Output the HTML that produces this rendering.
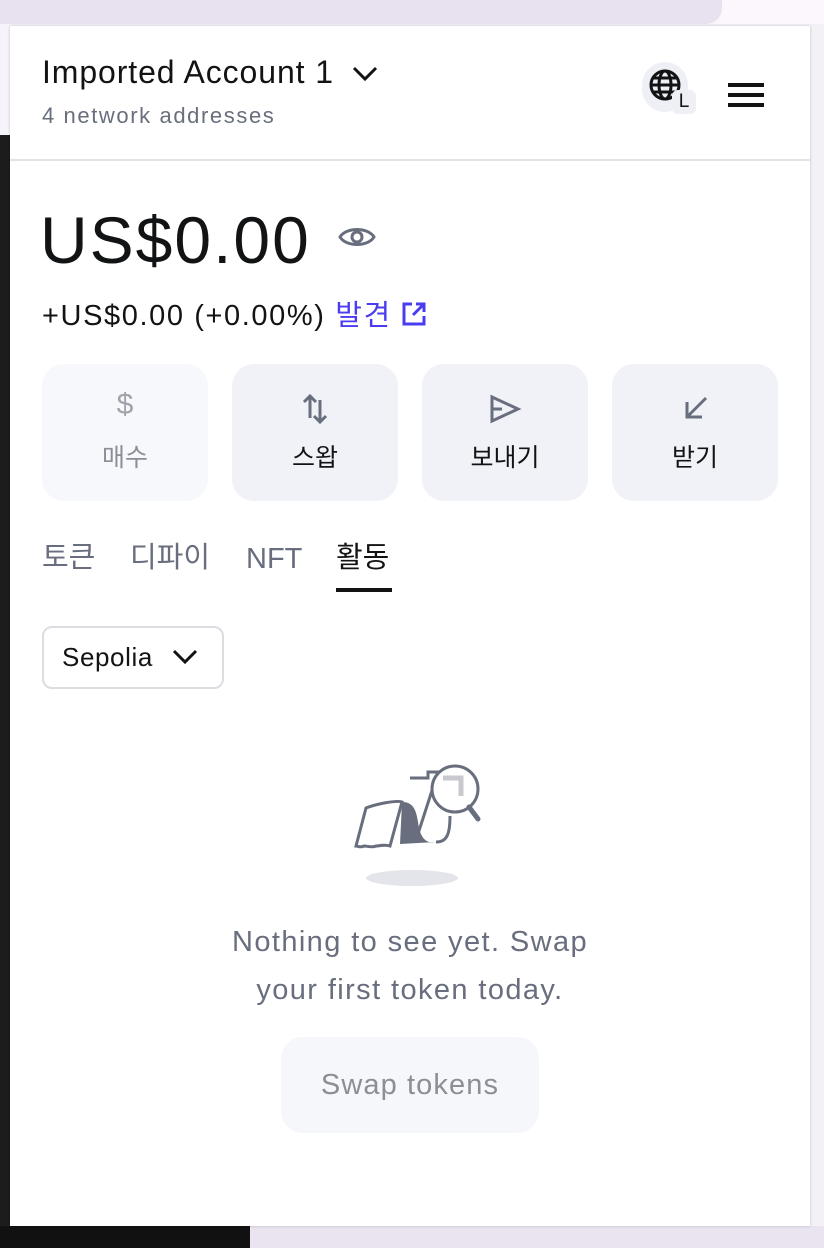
<!DOCTYPE html>
<html><head><meta charset="utf-8"><style>
*{box-sizing:border-box;margin:0;padding:0}
body{width:824px;height:1248px;position:relative;overflow:hidden;background:#f7f3fa;font-family:"Liberation Sans","Noto Sans CJK KR",sans-serif;}
.top{position:absolute;left:0;top:0;width:824px;height:24px;background:#fbf7fd}
.url{position:absolute;left:0;top:0;width:722px;height:24px;background:#e8e1ef;border-radius:0 0 16px 0}
.leftdark{position:absolute;left:0;top:135px;width:10px;height:1113px;background:#1c1c1c}
.bottom{position:absolute;left:0;top:1226px;width:824px;height:22px;background:#eae3f0}
.bottom .d{position:absolute;left:0;top:0;width:250px;height:22px;background:#111}
.right{position:absolute;left:810px;top:24px;width:14px;height:1224px;background:#f3f0f6}
.pop{position:absolute;left:10px;top:26px;width:800px;height:1200px;background:#fff;box-shadow:0 0 3px rgba(0,0,0,.2)}
.hdr{height:135px;border-bottom:2px solid #e2e3e8;position:relative}
.acct{position:absolute;left:32px;top:28px;font-size:32px;color:#121314;letter-spacing:.9px}
.sub{position:absolute;left:32px;top:77px;font-size:22px;color:#686e7d;letter-spacing:1.6px}
.bal{position:absolute;left:30px;top:176px;font-size:66px;color:#121314;letter-spacing:2px}
.chg{position:absolute;left:32px;top:266px;font-size:29px;color:#121314;letter-spacing:1.6px}
.disc{color:#4a3cf0}
.btn{position:absolute;top:338px;width:166px;height:137px;border-radius:22px;background:#f1f2f7;text-align:center}
.btn .l{position:absolute;left:0;right:0;top:74px;font-size:25px;color:#121314}
.tabs{position:absolute;top:512px;font-size:29px;color:#686e7d;line-height:40px}
.sel{position:absolute;left:32px;top:600px;width:182px;height:63px;border:2px solid #dcdde2;border-radius:10px;font-size:26px;color:#121314;padding:14px 0 0 18px;letter-spacing:.6px}
.empty{position:absolute;left:0;width:800px;text-align:center;font-size:29px;color:#686e7d;line-height:48px;top:892px;letter-spacing:1.4px}
.sw{position:absolute;left:271px;top:1011px;width:258px;height:96px;border-radius:22px;background:#f6f7fb;color:#8b8e96;font-size:29px;text-align:center;line-height:96px;letter-spacing:1.1px}
</style></head><body>
<div class="top"><div class="url"></div></div>
<div class="leftdark"></div><div class="right"></div>
<div class="bottom"><div class="d"></div></div>
<div class="pop">
 <div class="hdr">
  <div class="acct">Imported Account 1 <svg width="30" height="20" viewBox="0 0 28 20" style="margin-left:6px"><path d="M3 5l11 11 11-11" fill="none" stroke="#121314" stroke-width="3"/></svg></div>
  <div class="sub">4 network addresses</div>
  <div style="position:absolute;left:632px;top:36px;width:46px;height:50px;border-radius:23px;background:#eef0f5"></div>
  <svg style="position:absolute;left:638px;top:42px" width="34" height="34" viewBox="0 0 34 34"><g fill="none" stroke="#121314" stroke-width="3"><circle cx="17" cy="17" r="14"/><ellipse cx="17" cy="17" rx="6" ry="14"/><path d="M3 17h28M5 10h24M5 24h24"/></g></svg>
  <div style="position:absolute;left:662px;top:64px;width:24px;height:24px;border-radius:6px;background:#eef0f5;font-size:19px;text-align:center;line-height:24px;color:#121314">L</div>
  <div style="position:absolute;left:718px;top:57px;width:36px;height:4px;background:#121314;box-shadow:0 10px 0 #121314,0 20px 0 #121314"></div>
 </div>
 <div class="bal">US$0.00</div>
 <svg style="position:absolute;left:328px;top:198px" width="38" height="26" viewBox="0 0 38 26"><path d="M2 13C8 3 30 3 36 13C30 23 8 23 2 13Z" fill="none" stroke="#686e7d" stroke-width="3"/><circle cx="19" cy="13" r="5" fill="none" stroke="#686e7d" stroke-width="3"/></svg>
 <div class="chg">+US$0.00 (+0.00%) <span class="disc">발견</span> <svg width="26" height="26" viewBox="0 0 26 26" style="vertical-align:-2px"><path d="M11 3H3v20h20v-8M15 3h8v8M23 3L12 14" fill="none" stroke="#4a3cf0" stroke-width="3"/></svg></div>
 <div class="btn" style="left:32px;background:#f7f8fb"><div style="position:absolute;left:0;right:0;top:24px;font-size:30px;color:#a0a3ab">$</div><div class="l" style="color:#8b8e96">매수</div></div>
 <div class="btn" style="left:222px"><svg style="position:absolute;left:68px;top:28px" width="30" height="34" viewBox="0 0 30 34"><path d="M10 26V4M4 10l6-6 6 6M20 8v22M14 24l6 6 6-6" fill="none" stroke="#686e7d" stroke-width="3"/></svg><div class="l">스왑</div></div>
 <div class="btn" style="left:412px"><svg style="position:absolute;left:66px;top:30px" width="34" height="30" viewBox="0 0 34 30"><path d="M4 3L30 15 4 27V3Z M4 15h10" fill="none" stroke="#686e7d" stroke-width="3"/></svg><div class="l">보내기</div></div>
 <div class="btn" style="left:602px"><svg style="position:absolute;left:70px;top:30px" width="28" height="28" viewBox="0 0 28 28"><path d="M24 4L5 23M5 8v15h15" fill="none" stroke="#686e7d" stroke-width="3"/></svg><div class="l">받기</div></div>
 <div class="tabs" style="left:32px">토큰</div>
 <div class="tabs" style="left:120px">디파이</div>
 <div class="tabs" style="left:236px;top:513px;font-size:29px">NFT</div>
 <div class="tabs" style="left:326px;color:#121314">활동</div>
 <div style="position:absolute;left:326px;top:562px;width:56px;height:4px;background:#121314"></div>
 <div class="sel">Sepolia <svg width="28" height="20" viewBox="0 0 28 20" style="margin-left:10px"><path d="M3 5l11 11 11-11" fill="none" stroke="#121314" stroke-width="3"/></svg></div>
 <svg style="position:absolute;left:330px;top:714px" width="160" height="150" viewBox="0 0 160 150">
  <ellipse cx="72" cy="138" rx="46" ry="8" fill="#e4e5ea"/>
  <path d="M70 38h18v-6h10L76 100" fill="none" stroke="#686e7d" stroke-width="3"/>
  <path d="M26 68c10-4 30-8 36-6l-12 44c-6-2-10 0-14 0-4 2-8 0-12 0-4 2-6 0-8 0z" fill="#fff" stroke="#686e7d" stroke-width="3"/>
  <path d="M62 62c10 0 14 6 16 20 2 16 8 22 18 20l-36 2z" fill="#686e7d"/>
  <path d="M96 102c10 0 14-6 14-26" fill="none" stroke="#686e7d" stroke-width="3"/>
  <circle cx="115" cy="49" r="23" fill="#fff" stroke="#686e7d" stroke-width="3"/>
  <path d="M103 38h18v18" fill="none" stroke="#c8c9cf" stroke-width="5"/>
  <path d="M129 67l9 12" stroke="#686e7d" stroke-width="5" stroke-linecap="round"/>
 </svg>
 <div class="empty">Nothing to see yet. Swap<br>your first token today.</div>
 <div class="sw">Swap tokens</div>
</div>
</body></html>
